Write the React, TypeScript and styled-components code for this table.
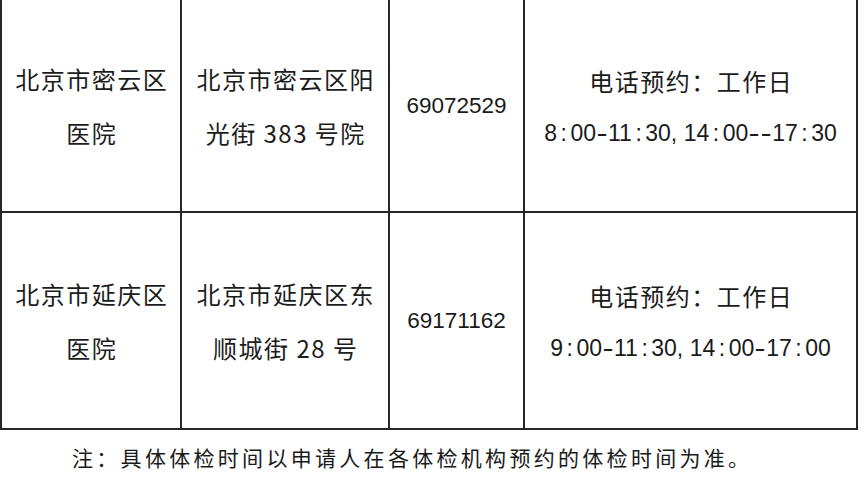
import React from "react";
import styled, { createGlobalStyle } from "styled-components";

const Global = createGlobalStyle`
  html, body { margin: 0; padding: 0; background: #ffffff; }
  body { font-family: "Noto Sans CJK SC", "Noto Sans", sans-serif; color: #1c1c1c; }
`;

const Page = styled.div`
  width: 864px;
  height: 493px;
  overflow: hidden;
  background: #ffffff;
`;

const Table = styled.div`
  display: grid;
  grid-template-columns: 180px 208px 135px 333px;
  grid-template-rows: 213px 217px;
  width: 856px;
  border-left: 2px solid #262626;
`;

const Cell = styled.div`
  display: flex;
  flex-direction: column;
  align-items: center;
  justify-content: center;
  border-right: 2px solid #262626;
  border-bottom: 2px solid #262626;
  text-align: center;
`;

const Line = styled.div`
  font-size: 24px;
  line-height: 54px;
  letter-spacing: 1.5px;
  white-space: nowrap;
  margin-right: -1.5px;
`;

const Phone = styled.div`
  font-family: "Liberation Sans", Arial, sans-serif;
  font-size: 22.5px;
  line-height: 54px;
  white-space: nowrap;
  color: #1a1a1a;
`;

const Hours = styled.div`
  font-family: "Liberation Sans", Arial, sans-serif;
  font-size: 23px;
  line-height: 50px;
  white-space: nowrap;
  color: #1a1a1a;
`;

const Colon = styled.span`
  display: inline-block;
  margin: 0 3.5px;
`;

const Dash = styled.span`
  display: inline-block;
  width: 12px;
  text-align: center;
  transform: scaleX(1.45);
`;

const Note = styled.div`
  padding-left: 72px;
  margin-top: 15px;
  font-size: 21px;
  line-height: 24px;
  letter-spacing: 3.3px;
  white-space: nowrap;
  color: #1a1a1a;
`;

type Row = {
  name: [string, string];
  addr: [string, string];
  phone: string;
  hours: string;
};

const rows: Row[] = [
  {
    name: ["北京市密云区", "医院"],
    addr: ["北京市密云区阳", "光街 383 号院"],
    phone: "69072529",
    hours: "8:00-11:30, 14:00--17:30",
  },
  {
    name: ["北京市延庆区", "医院"],
    addr: ["北京市延庆区东", "顺城街 28 号"],
    phone: "69171162",
    hours: "9:00-11:30, 14:00-17:00",
  },
];

function renderHours(text: string) {
  return text.split("").map((ch, i) => {
    if (ch === ":") return <Colon key={i}>:</Colon>;
    if (ch === "-") return <Dash key={i}>-</Dash>;
    return <React.Fragment key={i}>{ch}</React.Fragment>;
  });
}

export default function App() {
  return (
    <Page>
      <Global />
      <Table>
        {rows.map((r) => (
          <React.Fragment key={r.phone}>
            <Cell>
              <Line>{r.name[0]}</Line>
              <Line>{r.name[1]}</Line>
            </Cell>
            <Cell>
              <Line>{r.addr[0]}</Line>
              <Line>{r.addr[1]}</Line>
            </Cell>
            <Cell>
              <Phone>{r.phone}</Phone>
            </Cell>
            <Cell>
              <Line>电话预约：工作日</Line>
              <Hours>{renderHours(r.hours)}</Hours>
            </Cell>
          </React.Fragment>
        ))}
      </Table>
      <Note>注：具体体检时间以申请人在各体检机构预约的体检时间为准。</Note>
    </Page>
  );
}
